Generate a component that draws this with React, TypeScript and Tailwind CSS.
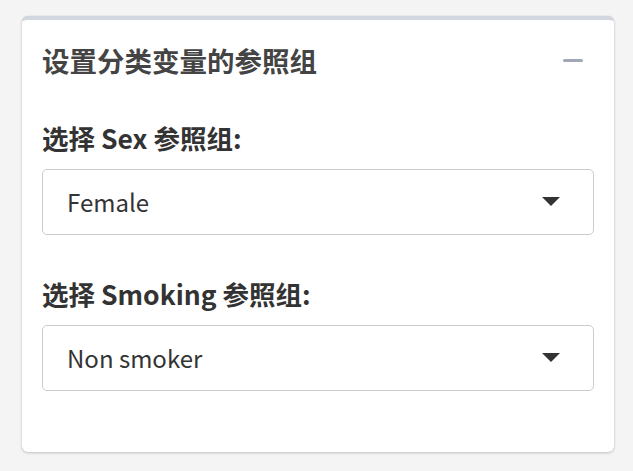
import React from "react";

function FakeSelect({ value }: { value: string }) {
  return (
    <div className="flex h-[66px] w-full items-center justify-between rounded-[5px] border border-[#cccccc] bg-white pl-[24px] pr-[33px] text-[24px] text-[#333333]">
      <span>{value}</span>
      <svg width="18" height="10" viewBox="0 0 18 10" className="shrink-0">
        <polygon points="0,0 18,0 9,9" fill="#333333" />
      </svg>
    </div>
  );
}

export default function App() {
  return (
    <div
      className="min-h-screen bg-[#f4f4f4] pl-[22px] pt-4"
      style={{ fontFamily: '"Noto Sans CJK SC", "Source Sans Pro", sans-serif' }}
    >
      <div className="flex h-[436px] w-[592px] flex-col rounded-md border-t-4 border-[#d2d6de] bg-white shadow-[0_0_1px_rgba(0,0,0,0.13),0_1px_3px_rgba(0,0,0,0.2)]">
        {/* header */}
        <div className="flex items-center justify-between px-5 pt-[20px]">
          <h3 className="text-[27.5px] font-bold leading-[40px] text-[#444444]">设置分类变量的参照组</h3>
          <div className="mr-[11px] h-[3px] w-[20px] rounded-full bg-[#a0a7b6]" />
        </div>

        {/* body */}
        <div className="flex flex-col px-5 pt-[40px]">
          <label className="mb-[13px] text-[26.5px] font-bold leading-[36px] text-[#333333]">选择 Sex 参照组:</label>
          <FakeSelect value="Female" />
          <label className="mb-[13px] mt-[41px] text-[26.5px] font-bold leading-[36px] text-[#333333]">
            选择 Smoking 参照组:
          </label>
          <FakeSelect value="Non smoker" />
        </div>
      </div>
    </div>
  );
}
